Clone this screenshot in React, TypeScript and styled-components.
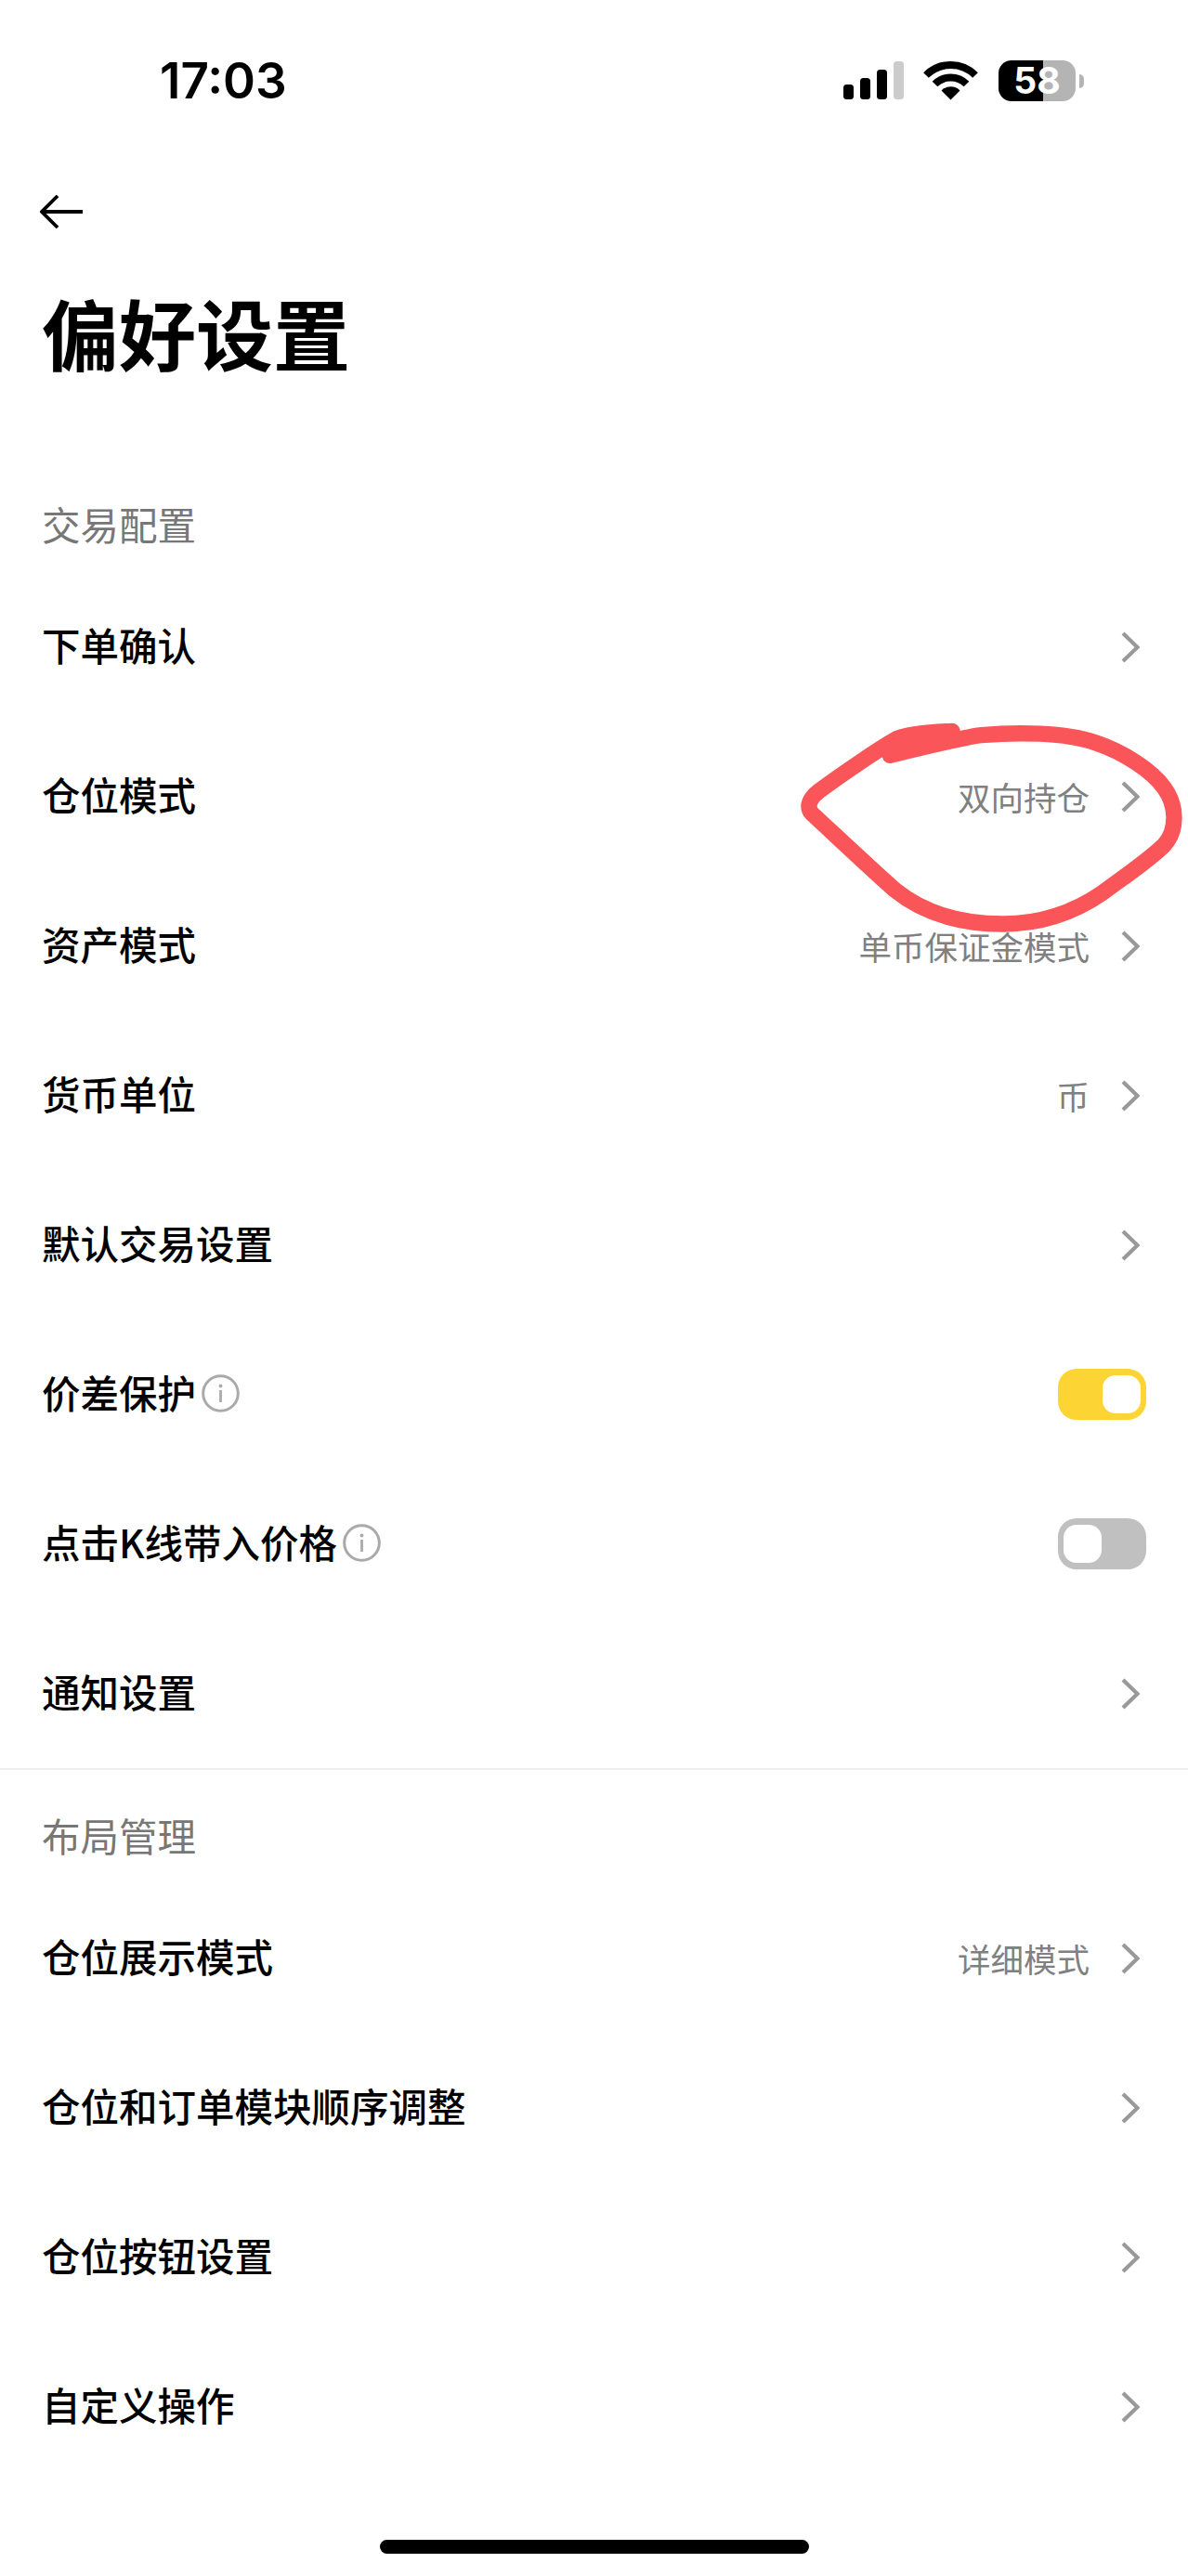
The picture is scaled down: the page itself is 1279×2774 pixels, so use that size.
import styled, { createGlobalStyle } from "styled-components";

const GlobalStyle = createGlobalStyle`
  html, body {
    margin: 0;
    padding: 0;
    background: #fff;
  }
`;

const tradeRows = [
  { label: "下单确认" },
  { label: "仓位模式", value: "双向持仓" },
  { label: "资产模式", value: "单币保证金模式" },
  { label: "货币单位", value: "币" },
  { label: "默认交易设置" },
  { label: "价差保护", info: true, toggle: "on" },
  { label: "点击K线带入价格", info: true, toggle: "off" },
  { label: "通知设置" },
];

const layoutRows = [
  { label: "仓位展示模式", value: "详细模式" },
  { label: "仓位和订单模块顺序调整" },
  { label: "仓位按钮设置" },
  { label: "自定义操作" },
];

type RowData = { label: string; value?: string; info?: boolean; toggle?: string };

const Chevron = () => (
  <ChevronIcon viewBox="0 0 20 34" fill="none">
    <path d="M2 2 L17.5 17 L2 32" stroke="#999" strokeWidth="4.2" />
  </ChevronIcon>
);

const InfoIcon = () => (
  <InfoSvg viewBox="0 0 41 41" fill="none">
    <circle cx="20.5" cy="20.5" r="18.8" stroke="#aaa" strokeWidth="3" />
    <circle cx="20.5" cy="12.5" r="1.9" fill="#aaa" />
    <rect x="19.1" y="17" width="2.8" height="13" fill="#aaa" />
  </InfoSvg>
);

const Row = ({ label, value, info, toggle }: RowData) => (
  <RowWrap>
    <RowLabel>
      {label}
      {info && <InfoIcon />}
    </RowLabel>
    {toggle ? (
      <Toggle $on={toggle === "on"}>
        <Thumb />
      </Toggle>
    ) : (
      <RowRight>
        {value && <RowValue>{value}</RowValue>}
        <Chevron />
      </RowRight>
    )}
  </RowWrap>
);

export default function App() {
  return (
    <Page>
      <GlobalStyle />
      <StatusBar>
        <Clock>17:03</Clock>
        <StatusIcons>
          <svg width="52" height="42" viewBox="0 0 52 42">
            <rect x="0" y="25" width="11" height="16" rx="3.5" fill="#000" />
            <rect x="18" y="18" width="11" height="23" rx="3.5" fill="#000" />
            <rect x="36" y="9" width="11" height="32" rx="3.5" fill="#000" />
            <rect x="54" y="0" width="11" height="41" rx="3.5" fill="#ccc" />
          </svg>
          <WifiIcon viewBox="0 0 57 42" fill="none">
            <path d="M2 15 A37.5 37.5 0 0 1 55 15" stroke="#000" strokeWidth="8" />
            <path d="M11.5 24.5 A24 24 0 0 1 45.5 24.5" stroke="#000" strokeWidth="8" />
            <path d="M28.5 41.5 L18.5 31.5 A14 14 0 0 1 38.5 31.5 Z" fill="#000" />
          </WifiIcon>
          <Battery>58</Battery>
          <BatteryNub />
        </StatusIcons>
      </StatusBar>

      <NavBar>
        <svg width="46" height="36" viewBox="0 0 46 36" fill="none">
          <path d="M19 1 L2 18 L19 35 M2 18 L46 18" stroke="#000" strokeWidth="3.8" />
        </svg>
      </NavBar>

      <Title>偏好设置</Title>

      <TopSectionLabel>交易配置</TopSectionLabel>
      {tradeRows.map((r) => (
        <Row key={r.label} {...r} />
      ))}

      <Divider />

      <SectionLabel>布局管理</SectionLabel>
      {layoutRows.map((r) => (
        <Row key={r.label} {...r} />
      ))}

      <HomeBar />

      {/* hand drawn red circle on top of the screenshot */}
      <Scribble viewBox="0 0 1317 780" fill="none">
        <path
          d="M555 112 C480 115 420 120 380 135 C340 155 200 250 122 308 C92 332 85 358 102 378 C180 450 280 545 370 625 C450 690 560 735 720 735 C850 735 960 690 1040 635 C1100 590 1190 530 1240 480 C1285 430 1280 350 1240 295 C1200 240 1110 180 1020 150 C920 115 760 115 650 125 C600 130 520 150 355 190"
          stroke="#fa5558"
          strokeWidth="52"
          strokeLinecap="round"
        />
        <path d="M340 150 L420 105 L570 95 L575 130 L350 205 Z" fill="#fa5558" />
      </Scribble>
    </Page>
  );
}

const fontStack = `"Noto Sans CJK SC", "Inter", sans-serif`;

const Page = styled.div`
  position: relative;
  width: 1279px;
  height: 2774px;
  overflow: hidden;
  background: #fff;
  color: #000;
  font-family: ${fontStack};
`;

const StatusBar = styled.div`
  height: 174px;
  padding: 0 112px 0 172px;
  box-sizing: border-box;
  display: flex;
  align-items: center;
  justify-content: space-between;
`;

const Clock = styled.div`
  font-family: "Inter", sans-serif;
  font-size: 53px;
  font-weight: 600;
  line-height: 1;
`;

const StatusIcons = styled.div`
  display: flex;
  align-items: center;

  svg {
    overflow: visible;
  }
`;

const WifiIcon = styled.svg`
  width: 57px;
  height: 42px;
  margin-left: 35px;
`;

const Battery = styled.div`
  width: 83px;
  height: 44px;
  margin-left: 23px;
  border-radius: 14px;
  background: linear-gradient(to right, #000 0 48px, #b4b4b4 48px 100%);
  color: #fff;
  font-family: "Inter", sans-serif;
  font-size: 39px;
  font-weight: 700;
  line-height: 44px;
  text-align: center;
`;

const BatteryNub = styled.div`
  width: 5px;
  height: 15px;
  margin-left: 4px;
  border-radius: 0 5px 5px 0;
  background: #b4b4b4;
`;

const NavBar = styled.div`
  height: 108px;
  padding-left: 43px;
  display: flex;
  align-items: center;
`;

const Title = styled.h1`
  margin: 0;
  height: 160px;
  padding-left: 45px;
  font-size: 83px;
  font-weight: 700;
  line-height: 150px;
`;

const SectionLabel = styled.div`
  height: 100px;
  margin-top: 22px;
  padding-left: 45px;
  font-size: 41.5px;
  line-height: 96px;
  color: #777;
`;

const TopSectionLabel = styled(SectionLabel)`
  margin-top: 74px;
`;

const RowWrap = styled.div`
  height: 161px;
  padding: 0 52px 0 45px;
  display: flex;
  align-items: center;
  justify-content: space-between;
`;

const RowLabel = styled.div`
  display: flex;
  align-items: center;
  padding-bottom: 3px;
  font-size: 41.5px;
  font-weight: 500;
  line-height: 1;
`;

const RowRight = styled.div`
  display: flex;
  align-items: center;
  gap: 34px;
`;

const RowValue = styled.span`
  font-size: 35.5px;
  font-weight: 400;
  line-height: 1;
  color: #808080;
`;

const ChevronIcon = styled.svg`
  width: 20px;
  height: 34px;
`;

const InfoSvg = styled.svg`
  width: 41px;
  height: 41px;
  margin-left: 6px;
`;

const Toggle = styled.div<{ $on: boolean }>`
  width: 95px;
  height: 55px;
  margin-right: -7px;
  padding: 7px 6px;
  box-sizing: border-box;
  border-radius: 20px;
  display: flex;
  justify-content: ${({ $on }) => ($on ? "flex-end" : "flex-start")};
  background: ${({ $on }) => ($on ? "#fcd535" : "#c0c0c0")};
`;

const Thumb = styled.div`
  width: 41px;
  height: 41px;
  border-radius: 14px;
  background: #fff;
`;

const Divider = styled.div`
  height: 2px;
  background: #eee;
`;

const HomeBar = styled.div`
  width: 462px;
  height: 15px;
  margin: 63px auto 0;
  border-radius: 8px;
  background: #000;
`;

const Scribble = styled.svg`
  position: absolute;
  left: 840px;
  top: 750px;
  width: 439px;
  height: 260px;
`;
